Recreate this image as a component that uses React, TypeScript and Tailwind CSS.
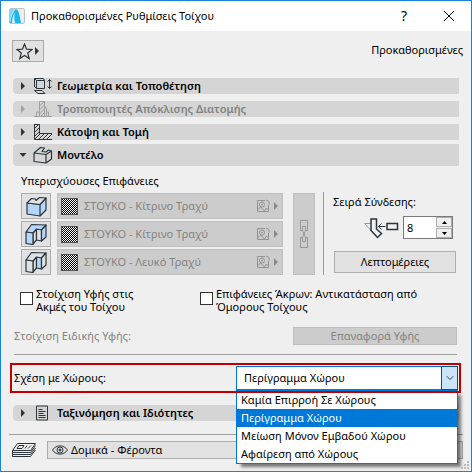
import type { ReactNode } from "react";
import { ChevronDown } from "lucide-react";

const ink = "#2b353b";

function Triangle({ down = false, color = "#333333" }: { down?: boolean; color?: string }) {
  return (
    <svg width="8" height="8" viewBox="0 0 8 8" fill={color} className="shrink-0">
      {down ? <path d="M0.5 2h7L4 6z" /> : <path d="M2 0v8l4-4z" />}
    </svg>
  );
}

function GeometryIcon() {
  return (
    <svg width="20" height="16" viewBox="0 0 20 16" fill="none" stroke={ink}>
      <path d="M3.500 2.500h8v8h-8zM1.500 9V.5h9l1 2M1.500 .5l2 2M1.500 8.500l2 2" />
      <path d="M1.500 12.500h7.500l3 3H5z" />
      <path d="M16.500 2v8M14.500 3.500l2-2 2 2M14.500 8.500l2 2 2-2" />
    </svg>
  );
}

function ProfileIcon() {
  return (
    <svg width="20" height="16" viewBox="0 0 20 16" fill="none" stroke="#a0a0a0">
      <path d="M1 15.500h18M6.500 15V.5h5V15M3.500 15v-4h3M11.500 5l2 3v7M13.500 11h2v4M6.500 5l5-4.500M6.500 9l5-5M6.500 13l5-5M8 15l3.500-3.500" />
    </svg>
  );
}

function PlanIcon() {
  return (
    <svg width="20" height="16" viewBox="0 0 20 16" fill="none" stroke={ink}>
      <path d="M1 .5h5.500v9H19M1.500 0v15.500H19" />
      <path d="M2 4l3-3M2 8l4-4M2 12l4-4M2 15l5-5M6 15l5-5M10 15l5-5M14 15l5-5" />
    </svg>
  );
}

function ModelIcon() {
  return (
    <svg width="20" height="18" viewBox="0 0 20 18" fill="none" stroke={ink} strokeWidth="1.200" strokeLinejoin="round">
      <path d="M1 7l12 1.500V17L1 15.500zM1 7l6.500-5.500 4 .5L9 5.500l4 .5 2.500-2L18.500 5v8L13 17M13 8.500L18.500 5" />
    </svg>
  );
}

function DocumentIcon() {
  return (
    <svg width="20" height="16" viewBox="0 0 20 16" fill="none" stroke={ink}>
      <path d="M3.500 1h11v14h-11z" />
      <path d="M5.500 4.500h4M5.500 6.500h7M5.500 8.500h5M5.500 10.500h7M5.500 12.500h7" />
    </svg>
  );
}

type Kind = "top" | "side" | "edge";

function SurfaceIcon({ kind }: { kind: Kind }) {
  const blue = "#b5d5fb";
  const grey = "#e1e1e1";
  const outer = kind === "side" ? blue : grey;
  const inner = kind === "side" ? grey : blue;
  return (
    <svg width="22" height="22" viewBox="0 0 22 22" stroke={ink} strokeWidth="1.200" strokeLinejoin="round">
      {kind === "top" ? (
        <>
          <path fill={blue} d="M2 8l13 1.500V21L2 19zM15 9.500L21 3v12l-6 6z" />
          <path fill={grey} d="M2 8l4.500-4.500 4 .5 .5 1.500 3.500-3L21 3l-6 6.500z" />
        </>
      ) : (
        <>
          <path fill={grey} d="M8 10l3.500-4V17L8 21z" />
          <path fill={inner} d="M11.500 6l5 .5V18l-5-1z" />
          <path fill={outer} d="M1 9l5.500-7.500L21 2l-4.500 5-5-1L8 10z" />
          <path fill={outer} d="M1 9l7 1v11.500l-7-1z" />
          <path fill={outer} d="M16.500 7L21 2v12l-4.500 4z" />
        </>
      )}
    </svg>
  );
}

function Swatch() {
  return (
    <svg width="17" height="17" viewBox="0 0 17 17" shapeRendering="crispEdges" className="shrink-0">
      <defs>
        <pattern id="dots" width="2" height="2" patternUnits="userSpaceOnUse">
          <path fill="white" d="M0 0h2v2H0z" />
          <path fill="black" d="M0 0h1v1H0zM1 1h1v1H1z" />
        </pattern>
      </defs>
      <path fill="url(#dots)" d="M0 0h17v17H0z" />
      <path fill="none" stroke="#555555" d="M.5 .5h16v16H.5z" />
    </svg>
  );
}

function PictureIcon() {
  return (
    <svg width="14" height="14" viewBox="0 0 14 14" fill="none" stroke="#939393">
      <path d="M9 1.500H1.500v11h11V6M10 1l3 1.500v3" />
      <circle cx="6" cy="5.500" r="2.500" />
      <circle cx="6" cy="5.500" r=".5" />
      <path d="M1.500 11l3-3 4 4 2-3 2 2" />
    </svg>
  );
}

function ChainIcon() {
  return (
    <svg width="10" height="30" viewBox="0 0 10 30" fill="none" stroke="#999999">
      <path d="M3.500 11.500h-2v-10h7v10h-2M3.500 18.500h-2v10h7v-10h-2" />
      <path d="M3.500 12V7.500h3V12l-1 1.500v3l1 1.500v4.500h-3V18l1-1.500v-3z" />
    </svg>
  );
}

function JunctionIcon() {
  return (
    <svg width="36" height="22" viewBox="0 0 36 22" fill="none" stroke={ink}>
      <path stroke="#999999" d="M8 6.500H1.500l11 12" />
      <path strokeWidth="1.500" d="M8 2h5.500v10l5 4.500-4 4-6.500-7z" />
      <path d="M22.500 9.500h-7M18.500 6.500l-3 3 3 3" />
      <path strokeWidth="1.500" d="M24 6.500h10.500v6H24z" />
    </svg>
  );
}

function LayersIcon() {
  return (
    <svg width="26" height="16" viewBox="0 0 26 16" fill="none" stroke={ink}>
      <path d="M6.500 1.500h18l-5 7H1.500zM1.500 8.500v2h18l5-7M1.500 10.500v2h18l5-6.500M1.500 12.500v2h18l5-6.500" />
      <path d="M8 3.500h5l-2 3H6zM14 6.500l2-3M17 6.500l3-3" />
    </svg>
  );
}

function EyeIcon() {
  return (
    <svg width="16" height="10" viewBox="0 0 16 10" fill="none" stroke={ink}>
      <path d="M.5 5C4-.5 12-.5 15.500 5 12 10.500 4 10.500.5 5z" />
      <circle cx="8" cy="5" r="3" />
      <circle cx="8" cy="5" r="1" fill={ink} />
    </svg>
  );
}

type SectionProps = { icon: ReactNode; title: string; open?: boolean; disabled?: boolean };

function Section({ icon, title, open, disabled }: SectionProps) {
  return (
    <button
      type="button"
      aria-expanded={!!open}
      disabled={disabled}
      className={`flex w-full items-center rounded-l-sm bg-[#d5d5d5] pl-1.5 font-semibold ${open ? "h-[22px]" : "h-4"} ${disabled ? "text-[#828282]" : "text-black"}`}
    >
      <Triangle down={open} color={disabled ? "#a0a0a0" : "#333333"} />
      <span className="mr-1 ml-1.5 shrink-0">{icon}</span>
      {title}
    </button>
  );
}

const surfaces: { kind: Kind; name: string }[] = [
  { kind: "top", name: "ΣΤΟΥΚΟ - Κίτρινο Τραχύ" },
  { kind: "side", name: "ΣΤΟΥΚΟ - Κίτρινο Τραχύ" },
  { kind: "edge", name: "ΣΤΟΥΚΟ - Λευκό Τραχύ" },
];

const relations = ["Καμία Επιρροή Σε Χώρους", "Περίγραμμα Χώρου", "Μείωση Μόνον Εμβαδού Χώρου", "Αφαίρεση από Χώρους"];

export default function App() {
  return (
    <div className="relative border border-[#1883d7] bg-[#efefef] pb-3 font-['Noto_Sans','Open_Sans',sans-serif] text-[11px] leading-4 text-black">
      {/* Title bar */}
      <header className="flex h-[30px] items-center bg-white pr-4 pl-2">
        <svg width="16" height="16" viewBox="0 0 16 16" className="shrink-0">
          <rect x=".5" y=".5" width="15" height="15" rx="1.500" fill="#e8eef1" stroke="#b9c3c8" />
          <path d="M1 15C2 9 4 3 7 1c3 1 4 8 5 14H6C5 11 5 7 6 4 4 7 3 11 3 15z" fill="#18b7ee" />
          <path d="M1 1h5C3 4 2 8 1 13z" fill="#86daf6" />
        </svg>
        <h1 className="ml-1.5 flex-1">Προκαθορισμένες Ρυθμίσεις Τοίχου</h1>
        <button type="button" aria-label="Βοήθεια" className="mr-9 text-[14px]">?</button>
        <button type="button" aria-label="Κλείσιμο">
          <svg width="12" height="12" viewBox="0 0 12 12" stroke="black"><path d="M1 1l10 10M11 1L1 11" /></svg>
        </button>
      </header>

      <div className="flex items-start justify-between pt-[9px] pr-2 pl-[11px]">
        <button type="button" aria-label="Αγαπημένα" className="flex h-[22px] w-8 items-center border border-[#a9a9a9] bg-[#e1e1e1] pl-[3px]">
          <svg width="17" height="17" viewBox="0 0 17 17" fill="none" stroke={ink} strokeWidth="1.200">
            <path d="M8.500 1l2 5.200 5.500.3-4.300 3.500 1.500 5.500-4.700-3.100-4.700 3.100L5.300 10 1 6.500l5.500-.3z" />
          </svg>
          <Triangle />
        </button>
        <span className="mt-0.5">Προκαθορισμένες</span>
      </div>

      <div className="mr-3 ml-3">
        <div className="flex flex-col gap-[7px] pt-4">
          <Section icon={<GeometryIcon />} title="Γεωμετρία και Τοποθέτηση" />
          <Section icon={<ProfileIcon />} title="Τροποποιητές Απόκλισης Διατομής" disabled />
          <Section icon={<PlanIcon />} title="Κάτοψη και Τομή" />
        </div>
        <div className="pt-1">
          <Section icon={<ModelIcon />} title="Μοντέλο" open />
        </div>
      </div>

      {/* Surfaces and junction order */}
      <div className="flex pt-[7px] pr-3.5 pl-5">
        <div className="flex-1">
          <h2>Υπερισχύουσες Επιφάνειες</h2>
          <div className="mt-1 flex gap-2.5">
            <div className="flex flex-1 flex-col gap-0.5">
              {surfaces.map((s) => (
                <div key={s.kind} className="flex gap-1.5">
                  <button type="button" aria-label={s.name} className="flex h-[26px] w-[30px] items-center justify-center border border-[#adadad] bg-[#e1e1e1]">
                    <SurfaceIcon kind={s.kind} />
                  </button>
                  <button type="button" disabled className="flex h-[26px] flex-1 items-center border border-[#bfbfbf] bg-[#cccccc] pr-0.5 pl-[3px] text-left text-[#838383]">
                    <Swatch />
                    <span className="ml-1.5 flex-1 whitespace-nowrap">{s.name}</span>
                    <PictureIcon />
                    <span className="ml-0.5"><Triangle color="#8b8b8b" /></span>
                  </button>
                </div>
              ))}
            </div>
            <button type="button" disabled aria-label="Σύνδεση επιφανειών" className="flex w-[22px] items-center justify-center border border-[#bfbfbf] bg-[#cccccc]">
              <ChainIcon />
            </button>
          </div>
        </div>
        <div className="mt-[19px] ml-2 w-[134px] border-l border-[#9b9b9b] pl-[9px]">
          <label htmlFor="order" className="block pt-0.5">Σειρά Σύνδεσης:</label>
          <div className="mt-1.5 mr-1 flex items-center justify-end gap-1">
            <JunctionIcon />
            <div className="flex h-[23px] w-[50px] border border-[#7a7a7a] bg-white">
              <input id="order" type="text" defaultValue="8" className="w-8 min-w-0 bg-white pl-[3px] outline-none" />
              <div className="flex flex-1 flex-col justify-between bg-[#efefef]">
                <button type="button" aria-label="Αύξηση" className="flex h-2.5 items-center justify-center border border-[#adadad] bg-[#efefef]">
                  <svg width="5" height="3" viewBox="0 0 5 3"><path d="M0 3h5L2.500 0z" /></svg>
                </button>
                <button type="button" aria-label="Μείωση" className="flex h-2.5 items-center justify-center border border-[#adadad] bg-[#efefef]">
                  <svg width="5" height="3" viewBox="0 0 5 3"><path d="M0 0h5L2.500 3z" /></svg>
                </button>
              </div>
            </div>
          </div>
          <button type="button" className="mt-3 ml-px h-[22px] w-[122px] border border-[#adadad] bg-[#e1e1e1]">Λεπτομέρειες</button>
        </div>
      </div>

      <div className="flex pt-3 pl-[19px] leading-[13px]">
        <label className="flex w-[180px] items-start gap-[3px]">
          <input type="checkbox" className="mt-[5px] size-[13px] shrink-0 appearance-none border border-[#333333] bg-white" />
          <span>Στοίχιση Υφής στις<br />Ακμές του Τοίχου</span>
        </label>
        <label className="flex items-start gap-[3px]">
          <input type="checkbox" className="mt-[5px] size-[13px] shrink-0 appearance-none border border-[#333333] bg-white" />
          <span className="whitespace-nowrap">Επιφάνειες Άκρων: Αντικατάσταση από<br />Όμορους Τοίχους</span>
        </label>
      </div>

      <div className="mt-3.5 mr-3.5 ml-[13px] flex items-center justify-between border-b border-[#a0a0a0] pb-[9px] text-[#838383]">
        <span>Στοίχιση Ειδικής Υφής:</span>
        <button type="button" disabled className="h-[18px] w-[164px] border border-[#bfbfbf] bg-[#cccccc]">Επαναφορά Υφής</button>
      </div>

      {/* Relation to zones */}
      <div className="relative mt-2 mr-2.5 ml-[9px] flex h-[30px] items-center justify-between pr-[3px] pl-1">
        <label htmlFor="relation">Σχέση με Χώρους:</label>
        <div className="relative w-[222px]">
          <select id="relation" defaultValue={relations[1]} className="block h-6 w-full appearance-none border border-[#0078d7] bg-white pl-[7px]">
            {relations.map((r) => <option key={r}>{r}</option>)}
          </select>
          <span className="pointer-events-none absolute inset-y-0 right-0 flex w-[17px] items-center justify-center border border-[#005499] bg-[#cce4f7]">
            <ChevronDown size={12} strokeWidth={2} color="#444444" />
          </span>
          <ul role="listbox" aria-label="Σχέση με Χώρους" className="absolute top-full left-0 z-10 w-full border border-[#0078d7] bg-white leading-[18px] shadow-[4px_4px_3px_-1px_rgba(0,0,0,0.5)]">
            {relations.map((r, i) => (
              <li key={r} role="option" aria-selected={i === 1} className={i === 1 ? "bg-[#0078d7] pl-1 text-white" : "pl-1"}>{r}</li>
            ))}
          </ul>
        </div>
        <div className="pointer-events-none absolute inset-0 z-20 border-2 border-[#c00000]" />
      </div>

      <div className="mt-3 mr-3 ml-3">
        <Section icon={<DocumentIcon />} title="Ταξινόμηση και Ιδιότητες" />
      </div>

      <footer className="mt-[13px] mr-2 ml-2 flex items-center gap-2.5 border-t border-[#a0a0a0] pt-1.5 pl-0.5">
        <LayersIcon />
        <button type="button" className="flex h-[18px] flex-1 items-center gap-[3px] border border-[#adadad] bg-[#e1e1e1] pl-1">
          <EyeIcon />
          Δομικά - Φέροντα
        </button>
      </footer>

      <svg width="8" height="8" viewBox="0 0 8 8" fill="#bcbcbc" className="absolute right-0.5 bottom-0.5">
        <path d="M6 0h2v2H6zM3 3h2v2H3zM6 3h2v2H6zM0 6h2v2H0zM3 6h2v2H3zM6 6h2v2H6z" />
      </svg>
    </div>
  );
}
